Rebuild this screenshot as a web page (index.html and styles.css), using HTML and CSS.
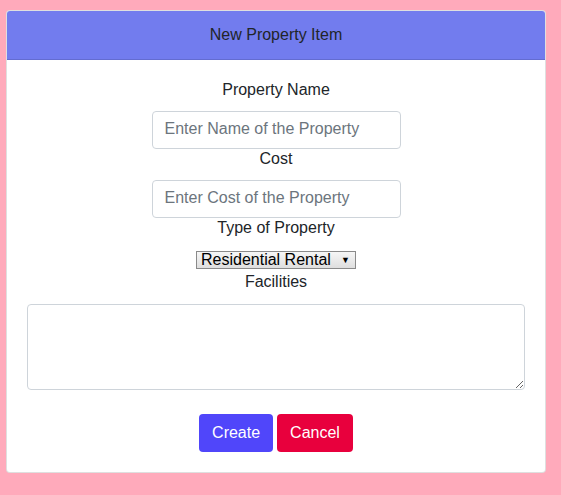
FILE: index.html
```html
<!DOCTYPE html>
<html>
<head>
<meta charset="utf-8">
<link rel="stylesheet" href="styles.css">
</head>
<body>
<div class="card">
  <div class="card-header">New Property Item</div>
  <form class="card-body">
    <label class="lbl" for="pname">Property Name</label>
    <input class="field" id="pname" type="text" placeholder="Enter Name of the Property">
    <label class="lbl" for="pcost">Cost</label>
    <input class="field" id="pcost" type="text" placeholder="Enter Cost of the Property">
    <label class="lbl lbl-type" for="ptype">Type of Property</label>
    <span class="picker-wrap">
      <select class="picker" id="ptype">
        <option>Residential Rental</option>
        <option>Commercial Rental</option>
      </select>
    </span>
    <label class="lbl lbl-fac" for="pfac">Facilities</label>
    <textarea class="area" id="pfac" rows="3"></textarea>
    <div class="actions">
      <button type="button" class="btn btn-create">Create</button>
      <button type="button" class="btn btn-cancel">Cancel</button>
    </div>
  </form>
</div>
</body>
</html>
```
FILE: styles.css
```css
html, body {
  margin: 0;
  background: #ffaabb;
}
body {
  padding: 10px 0 0 6px;
  height: 495px;
  box-sizing: border-box;
  font-family: "Liberation Sans", Arial, sans-serif;
  font-size: 16px;
  color: #212529;
}
.card {
  width: 540px;
  box-sizing: border-box;
  background: #fff;
  border: 1px solid rgba(0, 0, 0, 0.125);
  border-radius: 4px;
  overflow: hidden;
}
.card-header {
  background: #727cee;
  border-bottom: 1px solid rgba(0, 0, 0, 0.125);
  padding: 12px 20px;
  line-height: 24px;
  text-align: center;
  color: #212529;
}
.card-body {
  margin: 0;
  padding: 20px;
  display: flex;
  flex-direction: column;
  align-items: center;
}
.lbl {
  display: block;
  line-height: 19px;
  margin-bottom: 12px;
}
.field {
  width: 249px;
  height: 38px;
  box-sizing: border-box;
  padding: 5px 12px 7px;
  border: 1px solid #ced4da;
  border-radius: 4px;
  font-family: inherit;
  font-size: 16px;
  color: #495057;
  margin: 0;
}
.field::placeholder {
  color: #6c757d;
}
.lbl-type {
  margin-bottom: 14px;
}
.picker-wrap {
  position: relative;
  display: block;
  width: 160px;
  height: 18px;
  margin: 0 0 3px;
}
.picker-wrap::after {
  content: "\25BC";
  position: absolute;
  right: 6px;
  top: 4px;
  font-size: 9px;
  line-height: 10px;
  color: #000;
  pointer-events: none;
}
.picker {
  -webkit-appearance: none;
  appearance: none;
  display: block;
  width: 160px;
  height: 18px;
  box-sizing: border-box;
  font-family: inherit;
  font-size: 16px;
  margin: 0;
  padding: 0 0 0 4px;
  border: 1px solid #8a8a8a;
  border-radius: 0;
  color: #000;
  background: linear-gradient(#f6f6f6, #dedede);
  line-height: 16px;
}
.lbl-fac {
  margin-bottom: 13px;
}
.area {
  width: 100%;
  height: 86px;
  box-sizing: border-box;
  padding: 6px 12px;
  border: 1px solid #ced4da;
  border-radius: 4px;
  font-family: inherit;
  font-size: 16px;
  margin: 0;
  display: block;
}
.actions {
  margin-top: 24px;
  display: flex;
  gap: 4px;
}
.btn {
  height: 38px;
  padding: 6px 12px;
  border: 1px solid transparent;
  border-radius: 4px;
  font-family: inherit;
  font-size: 16px;
  line-height: 24px;
  color: #fff;
}
.btn-create {
  background: #5046fa;
}
.btn-cancel {
  background: #e8003d;
}
```
